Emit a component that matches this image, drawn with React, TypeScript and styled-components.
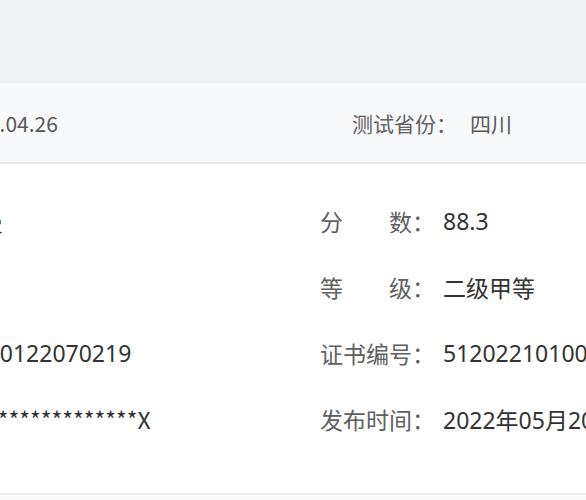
import styled, { createGlobalStyle } from 'styled-components';

const GlobalStyle = createGlobalStyle`
  html, body {
    margin: 0;
    padding: 0;
    background: #ffffff;
  }
  body {
    font-family: "Noto Sans CJK SC", "Noto Sans", sans-serif;
    overflow: hidden;
  }
`;

type Field = { label: string; value: string; masked?: boolean };

const leftFields: Field[] = [
  { label: '姓名', value: '张小曼' },
  { label: '性别', value: '女' },
  { label: '准考证号', value: '512020122070219' },
  { label: '身份证号', value: '51070*************X', masked: true },
];

const rightFields: Field[] = [
  { label: '分数', value: '88.3' },
  { label: '等级', value: '二级甲等' },
  { label: '证书编号', value: '5120221010012345' },
  { label: '发布时间', value: '2022年05月20日' },
];

function InfoColumn({ fields, pad }: { fields: Field[]; pad: number }) {
  return (
    <Column $pad={pad}>
      {fields.map((f) => (
        <Row key={f.label}>
          <Label>{f.label}</Label>
          <Colon>：</Colon>
          <Value $masked={f.masked}>{f.value}</Value>
        </Row>
      ))}
    </Column>
  );
}

export default function App() {
  return (
    <Page>
      <GlobalStyle />
      <TopBand />
      <Sheet>
        <Header>
          <HeaderItem $pad={67}>
            <HeaderLabel>测试时间：</HeaderLabel>
            <HeaderValue>2022.04.26</HeaderValue>
          </HeaderItem>
          <HeaderItem $pad={32}>
            <HeaderLabel>测试省份：</HeaderLabel>
            <HeaderValue $gap={13}>四川</HeaderValue>
          </HeaderItem>
        </Header>
        <Body>
          <InfoColumn fields={leftFields} pad={30} />
          <InfoColumn fields={rightFields} pad={0} />
        </Body>
      </Sheet>
    </Page>
  );
}

const Page = styled.div`
  width: 586px;
  height: 500px;
  overflow: hidden;
  background: #fafafa;
`;

const TopBand = styled.div`
  height: 83px;
  background: #f0f3f6;
`;

const Sheet = styled.div`
  width: 1100px;
  margin-left: -219px;
  background: #ffffff;
  border-bottom: 2px solid #ececec;
`;

const Header = styled.div`
  display: grid;
  grid-template-columns: 539px 1fr;
  align-items: center;
  height: 79px;
  background: #f8f9fb;
  border-bottom: 2px solid #e9e9e9;
`;

const HeaderItem = styled.div<{ $pad: number }>`
  display: flex;
  align-items: center;
  padding-left: ${(p) => p.$pad}px;
  font-size: 21px;
  line-height: 28px;
  white-space: nowrap;
`;

const HeaderLabel = styled.span`
  color: #626262;
`;

const HeaderValue = styled.span<{ $gap?: number }>`
  margin-left: ${(p) => p.$gap ?? 0}px;
  color: #585858;
`;

const Body = styled.div`
  display: grid;
  grid-template-columns: 539px 1fr;
  padding: 24px 0 41px;
`;

const Column = styled.div<{ $pad: number }>`
  display: flex;
  flex-direction: column;
  padding-left: ${(p) => p.$pad}px;
`;

const Row = styled.div`
  display: flex;
  align-items: center;
  height: 66px;
  font-size: 23px;
  white-space: nowrap;
`;

const Label = styled.span`
  width: 92px;
  text-align: justify;
  text-align-last: justify;
  color: #606060;
`;

const Colon = styled.span`
  width: 23px;
  color: #606060;
`;

const Value = styled.span<{ $masked?: boolean }>`
  margin-left: 8px;
  color: #333333;
  font-family: ${(p) =>
    p.$masked
      ? '"Noto Sans CJK SC", "Noto Sans", sans-serif'
      : '"Noto Sans", "Noto Sans CJK SC", sans-serif'};
`;
